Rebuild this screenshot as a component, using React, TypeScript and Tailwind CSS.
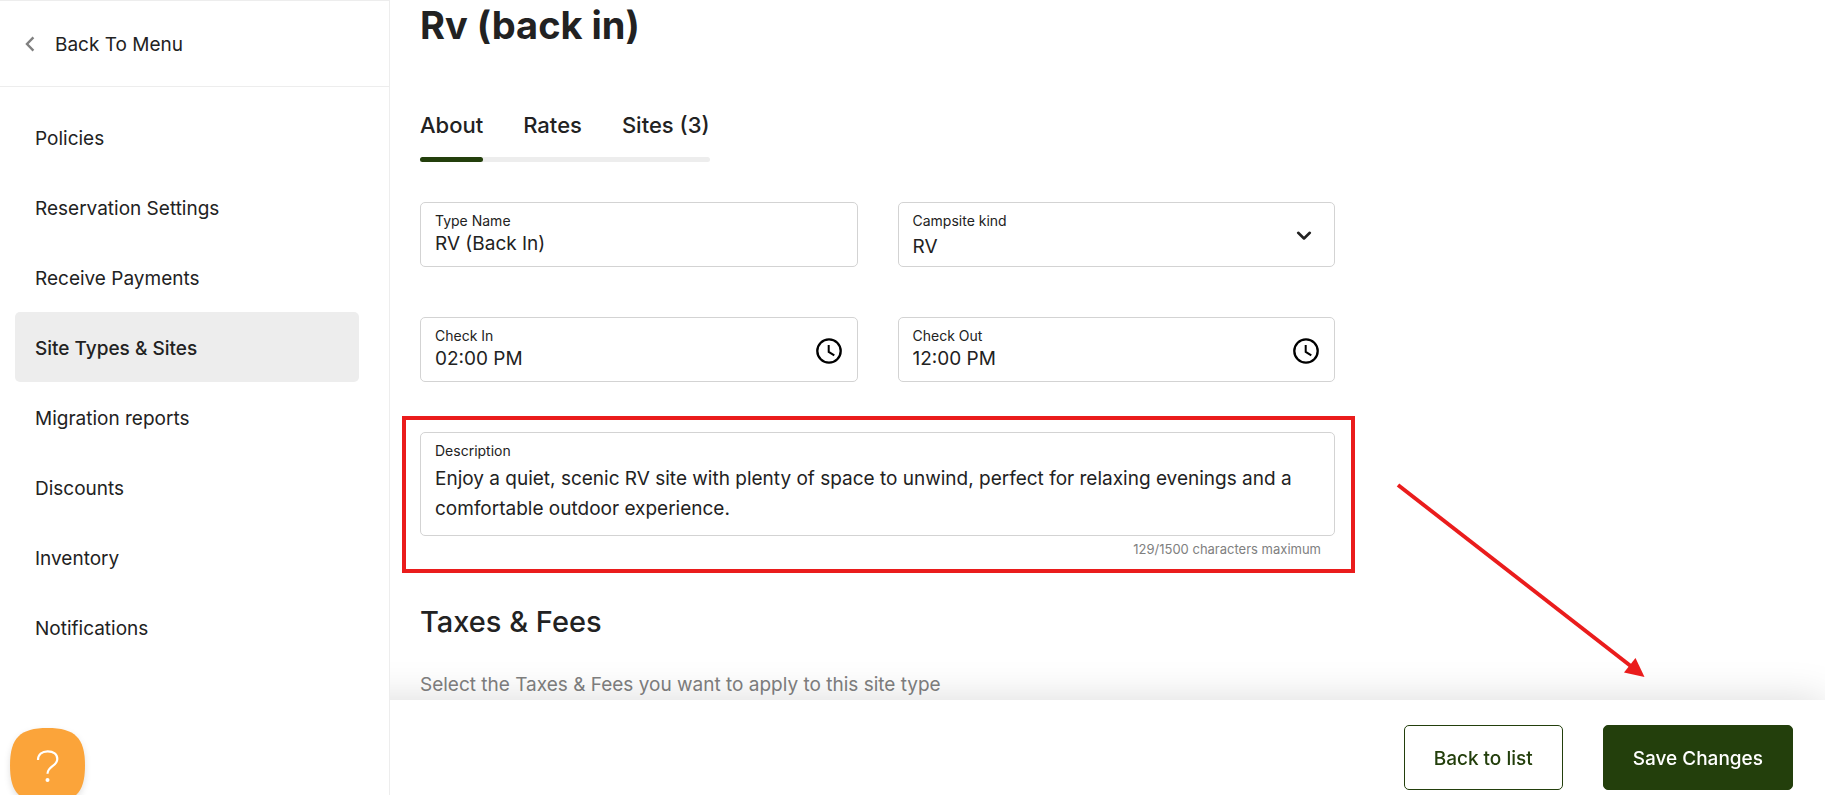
import React, { useState } from 'react';

const menuItems = [
  'Policies',
  'Reservation Settings',
  'Receive Payments',
  'Site Types & Sites',
  'Migration reports',
  'Discounts',
  'Inventory',
  'Notifications',
];

const tabs = ['About', 'Rates', 'Sites (3)'];

const fieldStyles = 'relative flex flex-col rounded-[5px] border border-[#d3d3d3] px-[14px] pt-2 focus-within:border-[#233f0c]';
const labelStyles = 'text-[14px] leading-5';
const valueStyles = 'w-full bg-transparent text-[19px] outline-none';
const buttonStyles = 'h-[65px] rounded-[5px] border border-[#233f0c] px-[29px] pt-[3px] text-[19px] font-medium';

const ClockIcon: React.FC = () => (
  <svg className="pointer-events-none absolute top-5 right-[15px] size-[26px]" viewBox="0 0 26 26" fill="none" stroke="#000" aria-hidden="true">
    <circle cx="13" cy="13" r="11.7" strokeWidth="2.3" />
    <path d="M12.7 7v6.9l5.6 3.4" strokeWidth="2" />
  </svg>
);

type TextFieldProps = {
  id: string;
  label: string;
  initial: string;
  clock?: boolean;
};

const TextField: React.FC<TextFieldProps> = ({ id, label, initial, clock }) => {
  const [value, setValue] = useState(initial);

  return (
    <div className={`${fieldStyles} h-[65px]`}>
      <label htmlFor={id} className={labelStyles}>
        {label}
      </label>
      <input
        id={id}
        type="text"
        className={`${valueStyles} h-[26px]`}
        value={value}
        onChange={(e) => setValue(e.target.value)}
      />
      {clock && <ClockIcon />}
    </div>
  );
};

const Sidebar: React.FC = () => (
  <aside className="relative z-20 w-[390px] shrink-0 border-t border-r border-[#ededed] bg-white">
    <a href="#menu" className="flex h-[86px] items-center border-b border-[#ededed] pl-[25px] text-[19px]">
      <svg className="h-4 w-[10px]" viewBox="0 0 10 16" fill="none" stroke="#808080" strokeWidth="2.4" aria-hidden="true">
        <path d="M8.4 1.4 2 8l6.4 6.6" />
      </svg>
      <span className="pt-1 pl-5">Back To Menu</span>
    </a>
    <nav className="flex flex-col pt-[15px] pr-[30px] pl-[15px]">
      {menuItems.map((item) => (
        <a
          key={item}
          href="#settings"
          className={`flex h-[70px] items-center rounded-[5px] px-5 pt-1 text-[19px] ${
            item === 'Site Types & Sites' ? 'bg-[#ededed] font-medium' : ''
          }`}
        >
          {item}
        </a>
      ))}
    </nav>
  </aside>
);

const Description: React.FC = () => {
  const [text, setText] = useState(
    'Enjoy a quiet, scenic RV site with plenty of space to unwind, perfect for relaxing evenings and a comfortable outdoor experience.'
  );

  return (
    <div className="relative mt-[50px]">
      <div className={fieldStyles}>
        <label htmlFor="description" className={labelStyles}>
          Description
        </label>
        <textarea
          id="description"
          rows={2}
          maxLength={1500}
          className={`${valueStyles} mt-[3px] mb-[11px] resize-none leading-[30px]`}
          value={text}
          onChange={(e) => setText(e.target.value)}
        />
      </div>
      <p className="pt-[3px] pr-[14px] text-right text-[13px] leading-5 text-[#808080]">
        {text.length}/1500 characters maximum
      </p>
      <div className="pointer-events-none absolute -top-4 -right-5 -bottom-[14px] -left-[18px] border-4 border-[#ea1c1c]" />
    </div>
  );
};

const App: React.FC = () => {
  const [activeTab, setActiveTab] = useState('About');

  return (
    <div className="relative flex h-screen overflow-hidden bg-white font-[Inter,'Liberation_Sans',sans-serif] text-[#222222]">
      <Sidebar />
      <main className="min-w-0 flex-1 overflow-hidden px-[30px]">
        <h1 className="text-[38px] leading-[50px] font-bold">Rv (back in)</h1>
        <div
          role="tablist"
          className="relative mt-[58px] inline-flex gap-10 before:absolute before:inset-x-0 before:bottom-0 before:h-[5px] before:rounded-full before:bg-[#ededed]"
        >
          {tabs.map((tab) => (
            <button
              key={tab}
              type="button"
              role="tab"
              aria-selected={tab === activeTab}
              className={`relative h-[54px] pb-[20px] text-[22px] leading-[34px] font-medium ${
                tab === activeTab
                  ? 'after:absolute after:inset-x-0 after:bottom-0 after:h-[5px] after:rounded-full after:bg-[#233f0c]'
                  : ''
              }`}
              onClick={() => setActiveTab(tab)}
            >
              {tab}
            </button>
          ))}
        </div>
        <form className="mt-10 max-w-[915px]">
          <div className="grid grid-cols-2 gap-x-10 gap-y-[50px]">
            <TextField id="type-name" label="Type Name" initial="RV (Back In)" />
            <div className={`${fieldStyles} h-[65px]`}>
              <label htmlFor="kind" className={labelStyles}>
                Campsite kind
              </label>
              <select id="kind" className={`${valueStyles} h-8 appearance-none`} defaultValue="RV">
                <option>RV</option>
                <option>Tent</option>
                <option>Cabin</option>
              </select>
              <svg
                className="pointer-events-none absolute top-7 right-[22px] h-[10px] w-4"
                viewBox="0 0 16 10"
                fill="none"
                stroke="#222"
                strokeWidth="2.6"
                strokeLinecap="round"
                strokeLinejoin="round"
                aria-hidden="true"
              >
                <path d="m2.2 1.8 5.8 5.7 5.8-5.7" />
              </svg>
            </div>
            <TextField id="check-in" label="Check In" initial="02:00 PM" clock />
            <TextField id="check-out" label="Check Out" initial="12:00 PM" clock />
          </div>
          <Description />
        </form>
        <h2 className="mt-[43px] text-[29px] leading-10 font-medium">Taxes & Fees</h2>
        <p className="mt-[28px] text-[19px] leading-[30px] text-[#808080]">
          Select the Taxes & Fees you want to apply to this site type
        </p>
      </main>
      <footer className="fixed inset-x-0 bottom-0 z-10 flex justify-end gap-10 bg-white pt-[25px] pr-8 pb-[5px] shadow-[0_0_40px_rgba(0,0,0,0.15)]">
        <button type="button" className={`${buttonStyles} text-[#233f0c]`}>
          Back to list
        </button>
        <button type="button" className={`${buttonStyles} bg-[#233f0c] text-white`}>
          Save Changes
        </button>
      </footer>
      <svg className="pointer-events-none absolute top-[480px] left-[1390px] z-30 h-[200px] w-[260px]" viewBox="0 0 260 200" fill="#ea1c1c" aria-hidden="true">
        <path d="M8 5 242 187" stroke="#ea1c1c" strokeWidth="4" />
        <path d="m254.500 197-20.500-4.500 11.500-14.500z" />
      </svg>
      <button type="button" aria-label="Help" className="fixed -bottom-2 left-[10px] z-30 size-[75px]">
        <svg className="size-full overflow-visible drop-shadow-md" viewBox="0 0 75 75" fill="none" aria-hidden="true">
          <path d="M37.500 0C65 0 75 10 75 37.500S65 75 37.500 75 0 65 0 37.500 10 0 37.500 0Z" fill="#fba43a" />
          <path d="M28 32c0-5.500 4-8.700 9.700-8.700 5.800 0 9.600 3 9.600 7.700 0 7.500-9.800 7-9.800 14.800" stroke="#fff" strokeWidth="2.200" />
          <circle cx="37.500" cy="52" r="2" fill="#fff" />
        </svg>
      </button>
    </div>
  );
};

export default App;
